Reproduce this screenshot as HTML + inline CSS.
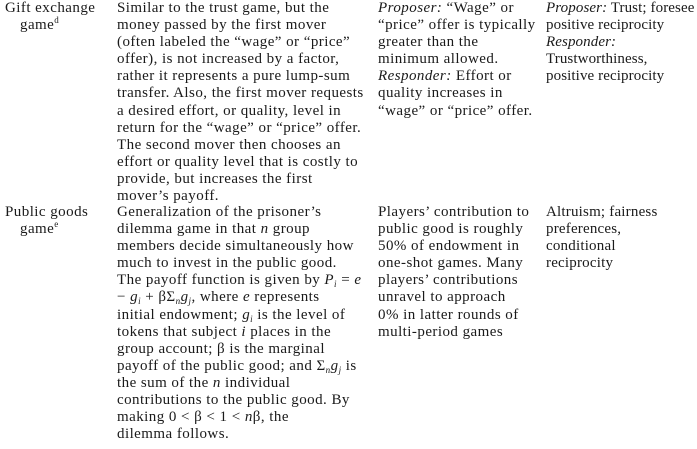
<!DOCTYPE html>
<html><head><meta charset="utf-8"><style>
html,body{margin:0;padding:0;background:#fff;}
body{width:697px;height:449px;position:relative;overflow:hidden;font-family:"Liberation Serif",serif;font-size:15px;line-height:17.1px;color:#1a1a1a;}
.c{position:absolute;white-space:nowrap;letter-spacing:0.45px;}
i{font-family:"Liberation Serif",serif;font-style:italic;}
sup{font-size:9px;line-height:0;vertical-align:6px;}
sub{font-size:9px;line-height:0;vertical-align:-3px;}
.in{padding-left:15px;}
</style></head><body>
<div class="c" style="left:5px;top:0px">Gift exchange<br><span class="in">game<sup>d</sup></span></div>
<div class="c" style="left:117px;top:0px">Similar to the trust game, but the<br>money passed by the first mover<br>(often labeled the “wage” or “price”<br>offer), is not increased by a factor,<br>rather it represents a pure lump-sum<br>transfer. Also, the first mover requests<br>a desired effort, or quality, level in<br>return for the “wage” or “price” offer.<br>The second mover then chooses an<br>effort or quality level that is costly to<br>provide, but increases the first<br>mover’s payoff.</div>
<div class="c" style="left:378px;top:0px"><i>Proposer:</i> “Wage” or<br>“price” offer is typically<br>greater than the<br>minimum allowed.<br><i>Responder:</i> Effort or<br>quality increases in<br>“wage” or “price” offer.</div>
<div class="c" style="left:546px;top:0px;letter-spacing:0.1px"><i>Proposer:</i> Trust; foresee<br>positive reciprocity<br><i>Responder:</i><br>Trustworthiness,<br>positive reciprocity</div>

<div class="c" style="left:5px;top:204px">Public goods<br><span class="in">game<sup>e</sup></span></div>
<div class="c" style="left:117px;top:204px">Generalization of the prisoner’s<br>dilemma game in that <i>n</i> group<br>members decide simultaneously how<br>much to invest in the public good.<br>The payoff function is given by <i>P<sub>i</sub></i> = <i>e</i><br>− <i>g<sub>i</sub></i> + βΣ<sub><i>n</i></sub><i>g<sub>j</sub></i>, where <i>e</i> represents<br>initial endowment; <i>g<sub>i</sub></i> is the level of<br>tokens that subject <i>i</i> places in the<br>group account; β is the marginal<br>payoff of the public good; and Σ<sub><i>n</i></sub><i>g<sub>j</sub></i> is<br>the sum of the <i>n</i> individual<br>contributions to the public good. By<br>making 0 &lt; β &lt; 1 &lt; <i>n</i>β, the<br>dilemma follows.</div>
<div class="c" style="left:378px;top:204px">Players’ contribution to<br>public good is roughly<br>50% of endowment in<br>one-shot games. Many<br>players’ contributions<br>unravel to approach<br>0% in latter rounds of<br>multi-period games</div>
<div class="c" style="left:546px;top:204px;letter-spacing:0.2px">Altruism; fairness<br>preferences,<br>conditional<br>reciprocity</div>
</body></html>
